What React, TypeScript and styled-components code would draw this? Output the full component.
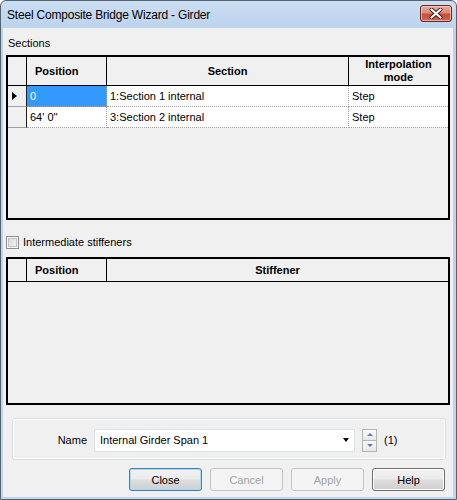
import React from 'react';
import styled, { createGlobalStyle } from 'styled-components';

const GlobalStyle = createGlobalStyle`
  html, body { margin: 0; padding: 0; background: #ffffff; }
  body { font-family: 'Liberation Sans', Arial, sans-serif; font-size: 11px; color: #000; }
  * { box-sizing: border-box; }
`;

const Window = styled.div`
  width: 457px;
  height: 500px;
  display: flex;
  flex-direction: column;
  border: 1px solid #56636f;
  border-radius: 6px 6px 0 0;
  background: linear-gradient(#cadef3, #bcd3ec 28px, #bfd6ee);
  padding: 0 3px 2px 2px;
  overflow: hidden;
`;

const TitleBar = styled.div`
  height: 27px;
  flex: none;
  display: flex;
  align-items: flex-start;
  padding-left: 4px;
`;

const TitleText = styled.div`
  font-size: 12px;
  letter-spacing: -0.2px;
  line-height: 14px;
  margin-top: 7px;
  color: #000;
`;

const CloseBox = styled.div`
  margin-left: auto;
  margin-right: 1px;
  margin-top: 4px;
  width: 32px;
  height: 17px;
  border: 1px solid #6b2a1f;
  border-radius: 3px;
  background: linear-gradient(#e9a899 0%, #dc8d7c 45%, #c7503a 55%, #d0664f 100%);
  box-shadow: inset 0 0 0 1px rgba(255, 220, 210, 0.6);
  display: flex;
  align-items: center;
  justify-content: center;
`;

const Client = styled.div`
  flex: 1;
  background: #f0f0f0;
  display: flex;
  flex-direction: column;
  padding: 0 3px;
`;

const Label = styled.div`
  margin-top: 9px;
  height: 13px;
  line-height: 13px;
  padding-left: 2px;
`;

const Grid = styled.div<{ $h: number; $mt: number }>`
  height: ${p => p.$h}px;
  margin-top: ${p => p.$mt}px;
  flex: none;
  border: 2px solid #000;
  background: #f0f0f0;
  display: flex;
  flex-direction: column;
`;

const GridRow = styled.div<{ $cols: string; $h: number }>`
  display: grid;
  grid-template-columns: ${p => p.$cols};
  height: ${p => p.$h}px;
  flex: none;
`;

const HeadCell = styled.div<{ $left?: boolean; $last?: boolean }>`
  border-right: ${p => (p.$last ? 'none' : '1px solid #000')};
  border-bottom: 1px solid #000;
  font-weight: bold;
  display: flex;
  align-items: center;
  justify-content: ${p => (p.$left ? 'flex-start' : 'center')};
  text-align: center;
  padding-left: ${p => (p.$left ? '8px' : '0')};
  line-height: 13px;
`;

const RowHead = styled.div`
  border-right: 1px solid #202020;
  border-bottom: 1px solid #a0a0a0;
  display: flex;
  align-items: center;
  padding-left: 4px;
`;

const Arrow = styled.div`
  width: 0;
  height: 0;
  border-left: 5px solid #000;
  border-top: 4px solid transparent;
  border-bottom: 4px solid transparent;
`;

const Cell = styled.div<{ $sel?: boolean; $last?: boolean }>`
  background: ${p => (p.$sel ? '#3399ff' : '#ffffff')};
  color: ${p => (p.$sel ? '#ffffff' : '#000')};
  border-right: ${p => (p.$last ? 'none' : '1px dotted #a0a0a0')};
  border-bottom: 1px dotted #a0a0a0;
  padding-left: 3px;
  line-height: 20px;
  white-space: nowrap;
  overflow: hidden;
`;

const CheckRow = styled.label`
  margin-top: 16px;
  height: 13px;
  display: flex;
  align-items: center;
  gap: 4px;
  line-height: 13px;
`;

const CheckBox = styled.span`
  width: 13px;
  height: 13px;
  border: 1px solid #8e8f8f;
  box-shadow: inset 0 0 0 1px #f4f4f4, inset 0 0 0 2px #c3c3c3;
  background: linear-gradient(135deg, #d5d5d5, #f6f6f6);
`;

const Group = styled.div`
  margin: 13px 4px 0 6px;
  height: 42px;
  flex: none;
  border: 1px solid #d5dfe5;
  border-radius: 3px;
  box-shadow: inset 0 0 0 1px #ffffff;
  display: flex;
  align-items: center;
  padding-top: 2px;
`;

const NameLabel = styled.div`
  width: 74px;
  text-align: right;
  margin-right: 7px;
`;

const Combo = styled.div`
  width: 261px;
  height: 23px;
  background: #fff;
  border: 1px solid #dde2e7;
  display: flex;
  align-items: center;
  padding-left: 5px;
`;

const DropArrow = styled.div`
  margin-left: auto;
  margin-right: 5px;
  width: 0;
  height: 0;
  border-top: 4px solid #000;
  border-left: 3.5px solid transparent;
  border-right: 3.5px solid transparent;
`;

const Spin = styled.div`
  margin-left: 7px;
  width: 15px;
  height: 23px;
  display: flex;
  flex-direction: column;
`;

const SpinBtn = styled.div<{ $up?: boolean }>`
  flex: 1;
  border: 1px solid #b5b5b5;
  border-top: ${p => (p.$up ? '1px solid #b5b5b5' : 'none')};
  background: linear-gradient(#fbfbfb, #e6e6e6);
  display: flex;
  align-items: center;
  justify-content: center;
`;

const SpinTri = styled.div<{ $up?: boolean }>`
  width: 0;
  height: 0;
  border-left: 3px solid transparent;
  border-right: 3px solid transparent;
  ${p => (p.$up ? 'border-bottom: 3px solid #5a7dc0;' : 'border-top: 3px solid #5a7dc0;')}
`;

const Count = styled.div`
  margin-left: 7px;
`;

const ButtonRow = styled.div`
  margin-top: 8px;
  margin-right: 5px;
  height: 23px;
  display: flex;
  justify-content: flex-end;
  gap: 8px;
`;

const Button = styled.button<{ $variant?: 'default' | 'disabled' | 'normal' }>`
  width: 73px;
  height: 23px;
  font-family: 'Liberation Sans', Arial, sans-serif;
  font-size: 11px;
  padding: 0;
  border-radius: 3px;
  border: 1px solid
    ${p => (p.$variant === 'default' ? '#3c7fb1' : p.$variant === 'disabled' ? '#c2c5c8' : '#707070')};
  color: ${p => (p.$variant === 'disabled' ? '#a3a3a3' : '#000')};
  background: ${p =>
    p.$variant === 'disabled'
      ? '#f4f4f4'
      : 'linear-gradient(#f2f2f2 0%, #ebebeb 48%, #dddddd 52%, #cfcfcf 100%)'};
  box-shadow: ${p =>
    p.$variant === 'default'
      ? 'inset 0 0 0 1px #a7dcf7'
      : p.$variant === 'disabled'
      ? 'none'
      : 'inset 0 0 0 1px #fbfbfb'};
`;

const sectionCols = '19px 80px 242px 1fr';
const stiffCols = '19px 80px 1fr';

const rows = [
  { pos: '0', sec: '1:Section 1 internal', mode: 'Step', current: true },
  { pos: "64' 0''", sec: '3:Section 2 internal', mode: 'Step', current: false },
];

export default function App() {
  return (
    <>
      <GlobalStyle />
      <Window>
        <TitleBar>
          <TitleText>Steel Composite Bridge Wizard - Girder</TitleText>
          <CloseBox>
            <svg width="14" height="11" viewBox="0 0 14 11">
              <path d="M2.5 1.5 L11.5 9.5 M11.5 1.5 L2.5 9.5" stroke="#3a1a14" strokeWidth="4" strokeLinecap="round" />
              <path d="M2.5 1.5 L11.5 9.5 M11.5 1.5 L2.5 9.5" stroke="#ffffff" strokeWidth="2.2" strokeLinecap="round" />
            </svg>
          </CloseBox>
        </TitleBar>
        <Client>
          <Label>Sections</Label>
          <Grid $h={165} $mt={5}>
            <GridRow $cols={sectionCols} $h={29}>
              <HeadCell />
              <HeadCell $left>Position</HeadCell>
              <HeadCell>Section</HeadCell>
              <HeadCell $last>
                Interpolation
                <br />
                mode
              </HeadCell>
            </GridRow>
            {rows.map(r => (
              <GridRow key={r.sec} $cols={sectionCols} $h={21}>
                <RowHead>{r.current && <Arrow />}</RowHead>
                <Cell $sel={r.current}>{r.pos}</Cell>
                <Cell>{r.sec}</Cell>
                <Cell $last>{r.mode}</Cell>
              </GridRow>
            ))}
          </Grid>
          <CheckRow>
            <CheckBox />
            Intermediate stiffeners
          </CheckRow>
          <Grid $h={148} $mt={8}>
            <GridRow $cols={stiffCols} $h={23}>
              <HeadCell />
              <HeadCell $left>Position</HeadCell>
              <HeadCell $last>Stiffener</HeadCell>
            </GridRow>
          </Grid>
          <Group>
            <NameLabel>Name</NameLabel>
            <Combo>
              Internal Girder Span 1
              <DropArrow />
            </Combo>
            <Spin>
              <SpinBtn $up>
                <SpinTri $up />
              </SpinBtn>
              <SpinBtn>
                <SpinTri />
              </SpinBtn>
            </Spin>
            <Count>(1)</Count>
          </Group>
          <ButtonRow>
            <Button $variant="default">Close</Button>
            <Button $variant="disabled">Cancel</Button>
            <Button $variant="disabled">Apply</Button>
            <Button $variant="normal">Help</Button>
          </ButtonRow>
        </Client>
      </Window>
    </>
  );
}
